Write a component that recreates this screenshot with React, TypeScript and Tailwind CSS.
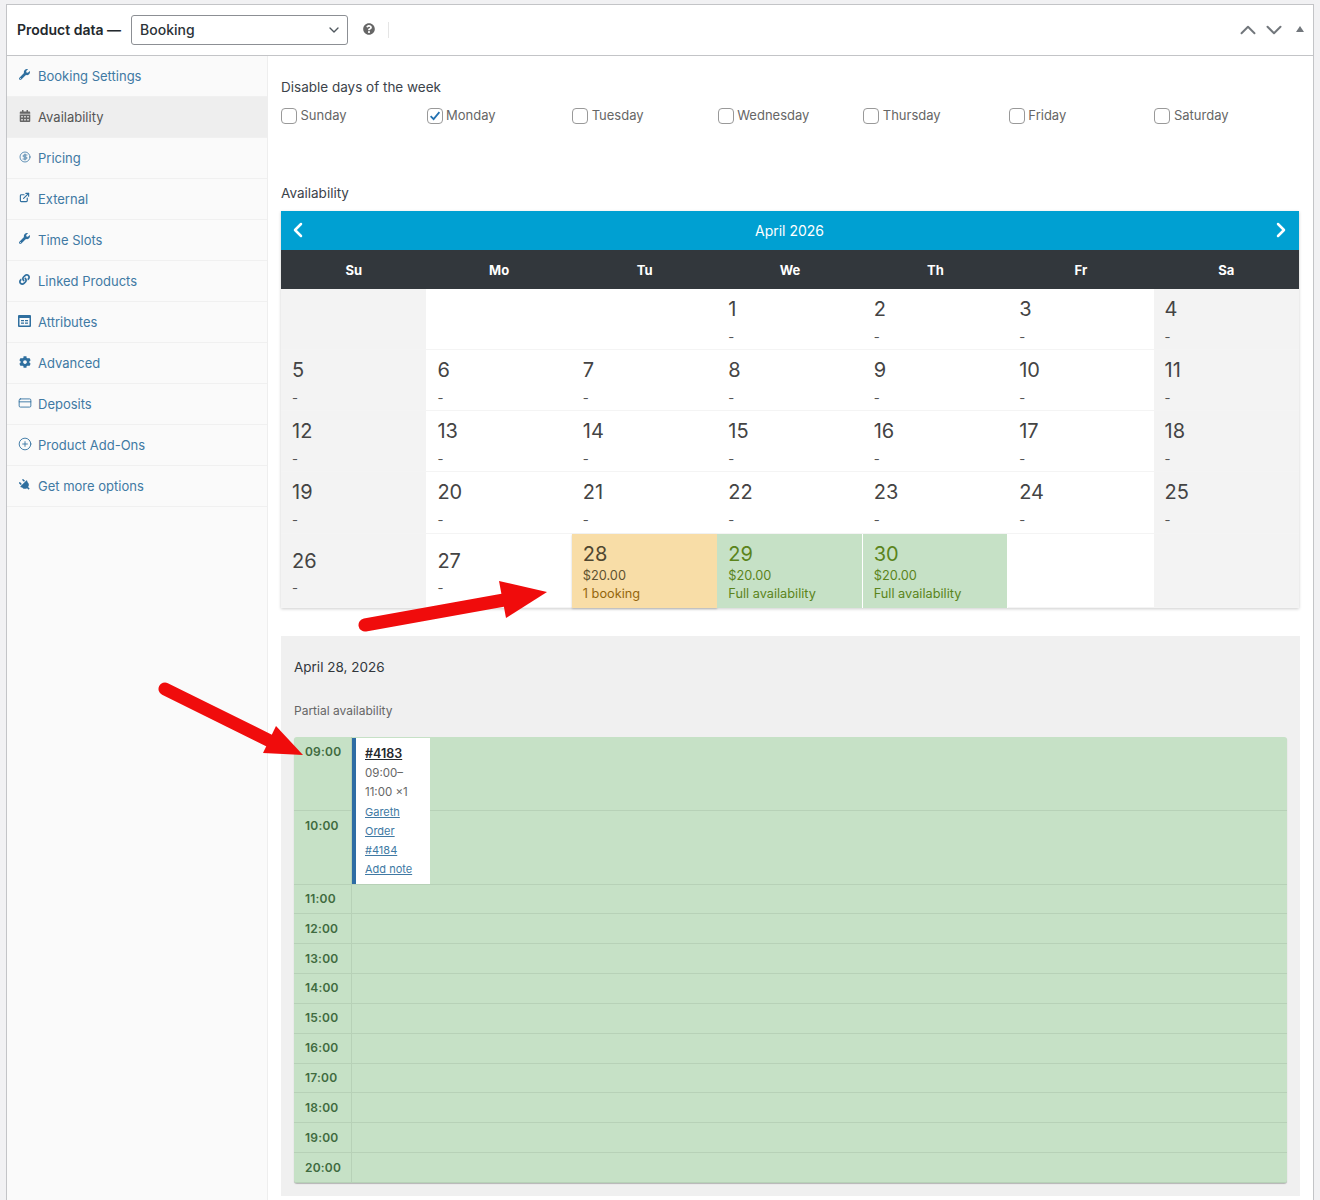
import { ChevronDown, ChevronLeft, ChevronRight, ChevronUp, CircleDollarSign, CirclePlus, CreditCard, ExternalLink } from "lucide-react";
import { FaCalendarAlt, FaCog, FaLink, FaPlug, FaQuestionCircle, FaWrench } from "react-icons/fa";
import type { ReactNode } from "react";

const tabs: { label: string; icon: ReactNode; active?: boolean }[] = [
  { label: "Booking Settings", icon: <FaWrench className="h-[11px] w-[11px]" /> },
  { label: "Availability", icon: <FaCalendarAlt className="h-[12px] w-[12px]" />, active: true },
  { label: "Pricing", icon: <CircleDollarSign className="h-[12px] w-[12px]" strokeWidth={1.5} /> },
  { label: "External", icon: <ExternalLink className="h-[11px] w-[11px]" strokeWidth={2.5} /> },
  { label: "Time Slots", icon: <FaWrench className="h-[11px] w-[11px]" /> },
  { label: "Linked Products", icon: <FaLink className="h-[11px] w-[11px]" /> },
  {
    label: "Attributes",
    icon: (
      <svg viewBox="0 0 13 12" className="h-[12px] w-[13px]" fill="currentColor">
        <path d="M0 1a1 1 0 0 1 1-1h11a1 1 0 0 1 1 1v10a1 1 0 0 1-1 1H1a1 1 0 0 1-1-1Zm1.5 2v7.5h10V3ZM3 5h3v1.2H3Zm4 0h3v1.2H7ZM3 7.5h3v1.2H3Zm4 0h3v1.2H7Z" />
      </svg>
    ),
  },
  { label: "Advanced", icon: <FaCog className="h-[12px] w-[12px]" /> },
  { label: "Deposits", icon: <CreditCard className="h-[14px] w-[14px]" strokeWidth={1.5} /> },
  { label: "Product Add-Ons", icon: <CirclePlus className="h-[14px] w-[14px]" strokeWidth={1.5} /> },
  { label: "Get more options", icon: <FaPlug className="h-[12px] w-[12px] -rotate-45" /> },
];

const days = ["Sunday", "Monday", "Tuesday", "Wednesday", "Thursday", "Friday", "Saturday"];
const weekHead = ["Su", "Mo", "Tu", "We", "Th", "Fr", "Sa"];

// one row per calendar week, null is a cell outside the month
const weeks: (number | null)[][] = [
  [null, null, null, 1, 2, 3, 4],
  [5, 6, 7, 8, 9, 10, 11],
  [12, 13, 14, 15, 16, 17, 18],
  [19, 20, 21, 22, 23, 24, 25],
  [26, 27, 28, 29, 30, null, null],
];

const hours = ["11:00", "12:00", "13:00", "14:00", "15:00", "16:00", "17:00", "18:00", "19:00", "20:00"];

function Cell({ day, col }: { day: number | null; col: number }) {
  const weekend = col === 0 || col === 6;
  if (day === 28) {
    return (
      <div className="flex flex-col bg-[#f8dda7] pl-[11px] pt-[8px] shadow-[0_1px_2px_rgba(0,0,0,0.2)]">
        <div className="text-[20px] leading-[24px] text-[#4f4630]">28</div>
        <div className="text-[12.75px] leading-[18px] mt-[1px] text-[#5f5230]">$20.00</div>
        <div className="text-[12.75px] leading-[18px] text-[#94660c]">1 booking</div>
      </div>
    );
  }
  if (day === 29 || day === 30) {
    return (
      <div className="flex flex-col bg-[#c6e1c6] pl-[11px] pt-[8px] mr-px">
        <div className="text-[20px] leading-[24px] text-[#5b841b]">{day}</div>
        <div className="text-[12.75px] leading-[18px] mt-[1px] text-[#5b841b]">$20.00</div>
        <div className="text-[12.75px] leading-[18px] text-[#5b841b]">Full availability</div>
      </div>
    );
  }
  const last = day === 26 || day === 27;
  return (
    <div className={`border-b border-[#f4f4f4] pl-[11px] ${last ? "pt-[15px]" : "pt-[8px]"} ${weekend ? "bg-[#f3f3f3]" : "bg-white"}`}>
      {day !== null && (
        <>
          <div className="text-[20px] leading-[24px] text-[#444]">{day}</div>
          <div className={`text-[13px] leading-[18px] text-[#555] ${last ? "mt-[6px]" : "mt-[7px]"}`}>-</div>
        </>
      )}
    </div>
  );
}

export default function App() {
  return (
    <div className="relative h-[1200px] w-[1320px] overflow-hidden bg-[#f1f1f3] pl-[6px] pr-[6px] pt-[4px] text-[#3c434a] font-['Inter','Liberation_Sans',sans-serif]">
      <div className="h-[1210px] border border-[#c3c4c7] bg-white">
        {/* header */}
        <div className="flex h-[51px] items-center border-b border-[#c3c4c7] pl-[10px] pr-[9px]">
          <span className="mb-[2px] text-[14px] font-semibold text-[#23282d]">Product data —</span>
          <div className="ml-[10px] flex h-[30px] w-[217px] items-center justify-between rounded-[3px] border border-[#8c8f94] pl-[8px] pr-[5px] text-[14px] font-medium text-[#2c3338]">
            <span className="mb-[1px]">Booking</span>
            <ChevronDown className="h-[16px] w-[16px] text-[#50575e]" />
          </div>
          <FaQuestionCircle className="mb-[2px] ml-[15px] h-[12px] w-[12px] text-[#666]" />
          <div className="ml-[13px] h-[16px] w-px bg-[#e5e5e5]" />
          <div className="ml-auto flex items-center text-[#72777c]">
            <ChevronUp className="h-[26px] w-[26px]" strokeWidth={1.8} />
            <ChevronDown className="h-[26px] w-[26px]" strokeWidth={1.8} />
            <div className="mb-[2px] ml-[9px] h-0 w-0 border-x-[4px] border-b-[6px] border-x-transparent border-b-[#72777c]" />
          </div>
        </div>

        <div className="flex h-[1154px]">
          {/* sidebar */}
          <div className="w-[261px] shrink-0 border-r border-[#eeeeee] bg-[#fafafa]">
            {tabs.map((t) => (
              <div
                key={t.label}
                className={`flex h-[41px] items-center border-b border-[#f0f0f0] pt-[2px] text-[13px] ${t.active ? "bg-[#eeeeee] text-[#555]" : "text-[#4079a3]"}`}
              >
                <span className={`flex w-[31px] justify-center pb-[5px] pl-[4px] ${t.active ? "text-[#666]" : "text-[#2f6f9f]"}`}>{t.icon}</span>
                {t.label}
              </div>
            ))}
          </div>

          {/* content */}
          <div className="min-w-0 flex-1 pl-[13px] pr-[13px] pt-[21px]">
            <div className="text-[13.5px] leading-[20px] text-[#3c434a]">Disable days of the week</div>
            <div className="mt-[9px] grid grid-cols-7 text-[13px] text-[#666]">
              {days.map((d) => (
                <div key={d} className="flex items-center gap-[3.5px]">
                  <span className="flex h-[16px] w-[16px] items-center justify-center rounded-[4px] border border-[#999] bg-white">
                    {d === "Monday" && (
                      <svg viewBox="0 0 16 16" className="h-[14px] w-[14px]">
                        <path d="M3 8.2 6.4 11.6 13 3.6" fill="none" stroke="#2271b1" strokeWidth="2" />
                      </svg>
                    )}
                  </span>
                  {d}
                </div>
              ))}
            </div>

            <div className="mt-[57px] text-[13.5px] leading-[20px]">Availability</div>

            {/* calendar */}
            <div className="mt-[8px] w-[1018px] shadow-[0_1px_3px_rgba(0,0,0,0.2)]">
              <div className="flex h-[39px] items-center justify-between bg-[#00a0d2] pl-[5px] pr-[6px] text-[14px] text-white">
                <ChevronLeft className="h-[24px] w-[24px]" strokeWidth={2.5} />
                <span>April 2026</span>
                <ChevronRight className="h-[24px] w-[24px]" strokeWidth={2.5} />
              </div>
              <div className="grid h-[39px] grid-cols-7 items-center bg-[#32373c] pt-[3px] text-center text-[13px] font-bold text-white">
                {weekHead.map((d) => (
                  <div key={d}>{d}</div>
                ))}
              </div>
              <div className="grid grid-cols-7 grid-rows-[61px_61px_61px_62px_74px]">
                {weeks.map((w, i) => w.map((d, j) => <Cell key={`${i}-${j}`} day={d} col={j} />))}
              </div>
            </div>

            {/* day detail */}
            <div className="mt-[28px] w-[1019px] bg-[#f0f0f0] px-[13px] pb-[13px] pt-[22px]">
              <div className="text-[13.5px] leading-[18px] text-[#32373c]">April 28, 2026</div>
              <div className="mt-[27px] text-[12px] leading-[16px] text-[#666]">Partial availability</div>
              <div className="relative mt-[18px] overflow-hidden rounded-[3px] bg-[#c6e1c6] text-[12px] font-semibold tracking-[0.2px] text-[#3f6b3f] shadow-[0_1px_1px_rgba(0,0,0,0.25)]">
                <HourRow label="09:00" tall />
                <HourRow label="10:00" tall />
                {hours.map((h) => (
                  <HourRow key={h} label={h} />
                ))}
                <div className="absolute left-[58px] top-px h-[146px] w-[78px] border-l-[4px] border-[#2e6da4] bg-white pl-[9px] pt-[6px] text-[11px] font-normal leading-[19px] tracking-normal text-[#666]">
                  <div className="text-[12.5px] font-semibold text-[#23282d] underline">#4183</div>
                  <div className="mt-[1px] text-[11.5px]">09:00–</div>
                  <div className="text-[11.5px]">11:00 ×1</div>
                  <div className="mt-[1px] text-[#4079a3] underline">Gareth</div>
                  <div className="text-[#4079a3] underline">Order</div>
                  <div className="text-[#4079a3] underline">#4184</div>
                  <div className="text-[#4079a3] underline">Add note</div>
                </div>
              </div>
            </div>
          </div>
        </div>
      </div>

      {/* annotation arrows */}
      <svg className="pointer-events-none absolute left-0 top-0" width="1320" height="1200" viewBox="0 0 1320 1200">
        <path d="M365 625 504 600" stroke="#f00c0c" strokeWidth="13" strokeLinecap="round" fill="none" />
        <polygon points="499,581 547,592 506,618" fill="#f00c0c" />
        <path d="M165 689 272 742" stroke="#f00c0c" strokeWidth="13" strokeLinecap="round" fill="none" />
        <polygon points="276,726 303,755 263,753" fill="#f00c0c" />
      </svg>
    </div>
  );
}

function HourRow({ label, tall }: { label: string; tall?: boolean }) {
  return (
    <div className={`flex border-b border-[#b7d1b7] last:border-b-0 ${tall ? "h-[74px]" : "h-[29.85px]"}`}>
      <div className={`w-[58px] shrink-0 border-r border-[#b7d1b7] pl-[11px] ${tall ? "pt-[6px]" : "flex items-center"}`}>{label}</div>
    </div>
  );
}
